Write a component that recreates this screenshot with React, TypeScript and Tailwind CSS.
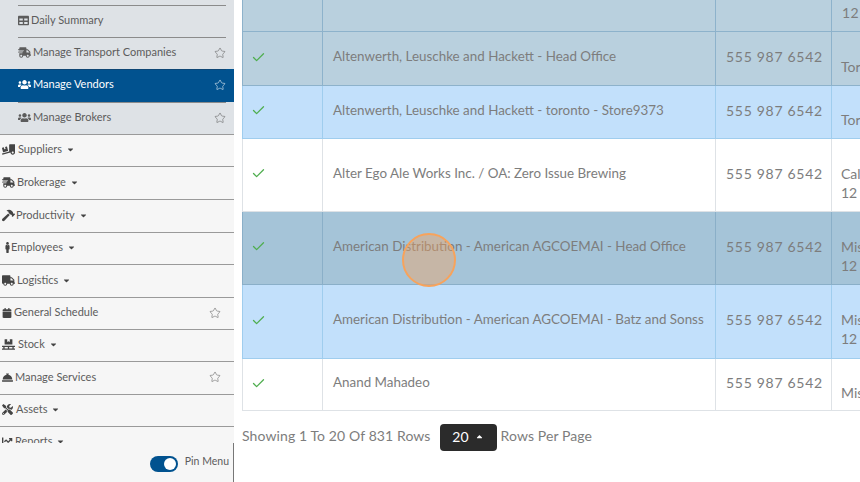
import {
  FaCalendar,
  FaCaretDown,
  FaCaretUp,
  FaChartLine,
  FaConciergeBell,
  FaHammer,
  FaMale,
  FaPallet,
  FaShippingFast,
  FaTable,
  FaTools,
  FaTruck,
  FaTruckLoading,
  FaUsers,
} from "react-icons/fa";
import { FiCheck } from "react-icons/fi";
import { Star } from "lucide-react";
import type { IconType } from "react-icons";

type SubItem = { label: string; icon: IconType; size: string; star?: boolean; active?: boolean; h: string };
type MenuItem = { label: string; icon: IconType; size: string; gap: string; caret?: boolean; star?: boolean; h: string };

const subItems: SubItem[] = [
  { label: "Daily Summary", icon: FaTable, size: "text-[11px]", h: "h-[32px]" },
  { label: "Manage Transport Companies", icon: FaShippingFast, size: "text-[13px]", star: true, h: "h-[32px]" },
  { label: "Manage Vendors", icon: FaUsers, size: "text-[13px]", star: true, active: true, h: "h-[33px]" },
  { label: "Manage Brokers", icon: FaUsers, size: "text-[13px]", star: true, h: "h-[32px]" },
];

const menuItems: MenuItem[] = [
  { label: "Suppliers", icon: FaTruckLoading, size: "text-[13px]", gap: "w-[18px]", caret: true, h: "h-[32px]" },
  { label: "Brokerage", icon: FaShippingFast, size: "text-[13px]", gap: "w-[17px]", caret: true, h: "h-[33px]" },
  { label: "Productivity", icon: FaHammer, size: "text-[13px]", gap: "w-[16px]", caret: true, h: "h-[33px]" },
  { label: "Employees", icon: FaMale, size: "text-[11px]", gap: "w-[11px]", caret: true, h: "h-[32px]" },
  { label: "Logistics", icon: FaTruck, size: "text-[13px]", gap: "w-[17px]", caret: true, h: "h-[33px]" },
  { label: "General Schedule", icon: FaCalendar, size: "text-[10px]", gap: "w-[14px]", star: true, h: "h-[32px]" },
  { label: "Stock", icon: FaPallet, size: "text-[13px]", gap: "w-[18px]", caret: true, h: "h-[32px]" },
  { label: "Manage Services", icon: FaConciergeBell, size: "text-[11px]", gap: "w-[15px]", star: true, h: "h-[33px]" },
  { label: "Assets", icon: FaTools, size: "text-[11px]", gap: "w-[16px]", caret: true, h: "h-[32px]" },
  { label: "Reports", icon: FaChartLine, size: "text-[11px]", gap: "w-[15px]", caret: true, h: "h-[32px]" },
];

type Row = {
  name: string;
  phone: string;
  address: string[];
  h: string;
  bg: string;
  border: string;
};

const rows: Row[] = [
  { name: "Altenwerth, Leuschke and Hackett - Head Office", phone: "555 987 6542", address: ["", "Toronto"], h: "h-[54px]", bg: "bg-[#b9d0de]", border: "border-[#8db2cb]" },
  { name: "Altenwerth, Leuschke and Hackett - toronto - Store9373", phone: "555 987 6542", address: ["", "Toronto"], h: "h-[53px]", bg: "bg-[#c2e0fb]", border: "border-[#9fcdee]" },
  { name: "Alter Ego Ale Works Inc. / OA: Zero Issue Brewing", phone: "555 987 6542", address: ["", "Calgary", "12"], h: "h-[73px]", bg: "bg-white", border: "border-[#dee2e6]" },
  { name: "American Distribution - American AGCOEMAI - Head Office", phone: "555 987 6542", address: ["", "Mississauga", "12"], h: "h-[73px]", bg: "bg-[#a5c4d8]", border: "border-[#8aafc8]" },
  { name: "American Distribution - American AGCOEMAI - Batz and Sonss", phone: "555 987 6542", address: ["", "Mississauga", "12"], h: "h-[74px]", bg: "bg-[#c2e0fb]", border: "border-[#9fcdee]" },
  { name: "Anand Mahadeo", phone: "555 987 6542", address: ["", "Mississauga"], h: "h-[52px]", bg: "bg-white", border: "border-[#dee2e6]" },
];

const App = () => {
  return (
    <div className="relative flex h-[482px] w-[860px] overflow-hidden bg-white font-['Lato',sans-serif] text-[#7d7d7d]">
      {/* Sidebar */}
      <div className="flex h-full w-[234px] shrink-0 flex-col bg-[#f6f6f6] text-[11px] text-[#5c5c5c]">
        <div className="flex-1 overflow-hidden">
          <div className="h-[5px] bg-[#dee2e6]" />
          {subItems.map((item) => (
            <div
              key={item.label}
              className={`${item.h} flex items-center pr-[8px] ${item.active ? "bg-[#01528f] text-white" : "bg-[#dee2e6]"}`}
            >
              <div className={`ml-[18px] flex h-full flex-1 items-center border-t ${item.active ? "border-[#0f4674] pb-[3px]" : "border-[#8b8b8b] pb-[2px]"}`}>
                <item.icon className={`mr-[2px] shrink-0 ${item.size}`} />
                <span className="flex-1">{item.label}</span>
                {item.star && <Star size={12} strokeWidth={1.1} />}
              </div>
            </div>
          ))}
          {menuItems.map((item) => (
            <div key={item.label} className={`${item.h} flex items-center border-t border-[#9a9a9a] pb-[2px] pr-[13px]`}>
              <span className={`${item.gap} flex shrink-0 items-center pl-[2px]`}>
                <item.icon className={`shrink-0 text-[#444444] ${item.size}`} />
              </span>
              <span>{item.label}</span>
              {item.caret && <FaCaretDown className="ml-[4px] text-[9px] text-[#444444]" />}
              {item.star && <Star size={12} strokeWidth={1.1} className="ml-auto" />}
            </div>
          ))}
        </div>
        <div className="flex h-[39px] shrink-0 items-start justify-end border-r border-[#777777] pr-[4px]">
          <div className="mt-[13px] flex h-[16px] w-[28px] items-center justify-end rounded-full bg-[#01528f] pr-[2px]">
            <div className="h-[12px] w-[12px] rounded-full bg-white" />
          </div>
          <span className="ml-[7px] mt-[10px] text-[10.5px] leading-[16px]">Pin Menu</span>
        </div>
      </div>

      {/* Main */}
      <div className="min-w-0 flex-1 pl-[8px]">
        <table className="w-[640px] table-fixed border-collapse text-[13.4px]">
          <colgroup>
            <col className="w-[80px]" />
            <col className="w-[393px]" />
            <col className="w-[116px]" />
            <col className="w-[51px]" />
          </colgroup>
          <tbody>
            <tr className="h-[31px] bg-[#b9d0de]">
              <td className="border border-t-0 border-[#8db2cb]" />
              <td className="border border-t-0 border-[#8db2cb]" />
              <td className="border border-t-0 border-[#8db2cb]" />
              <td className="whitespace-nowrap border border-t-0 border-[#8db2cb] px-[10px] align-top text-[14px] leading-[20px] tracking-[0.5px]">
                <div className="mt-[3px]">12</div>
              </td>
            </tr>
            {rows.map((row) => (
              <tr key={row.name} className={`${row.h} ${row.bg}`}>
                <td className={`border ${row.border} pb-[2px] pl-[8px]`}>
                  <FiCheck className="text-[15px] text-[#4fae4f]" />
                </td>
                <td className={`whitespace-nowrap border ${row.border} px-[10px] pb-[3px]`}>{row.name}</td>
                <td className={`whitespace-nowrap border ${row.border} px-[10px] pb-[3px] text-[14px] tracking-[0.7px]`}>{row.phone}</td>
                <td className={`whitespace-nowrap border ${row.border} px-[9px] pb-[3px] text-[14px] leading-[19px]`}>
                  {row.address.map((line, i) => (
                    <div key={i} className="h-[19px]">{line}</div>
                  ))}
                </td>
              </tr>
            ))}
          </tbody>
        </table>

        {/* Pagination */}
        <div className="mt-[13px] flex items-center text-[14px] tracking-[0.1px]">
          <span className="mb-[3px]">Showing 1 To 20 Of 831 Rows</span>
          <button className="ml-[9px] mr-[4px] flex h-[27px] w-[57px] items-center justify-center gap-[6px] rounded-[4px] bg-[#2b2b2b] pb-[2px] text-[14px] text-white">
            20
            <FaCaretUp className="text-[9px]" />
          </button>
          <span className="mb-[3px]">Rows Per Page</span>
        </div>
      </div>

      {/* Click marker */}
      <div className="absolute left-[402px] top-[233px] h-[54px] w-[54px] rounded-full border-2 border-[#f7a35c] bg-[#f7a35c]/40" />
    </div>
  );
};

export default App;
